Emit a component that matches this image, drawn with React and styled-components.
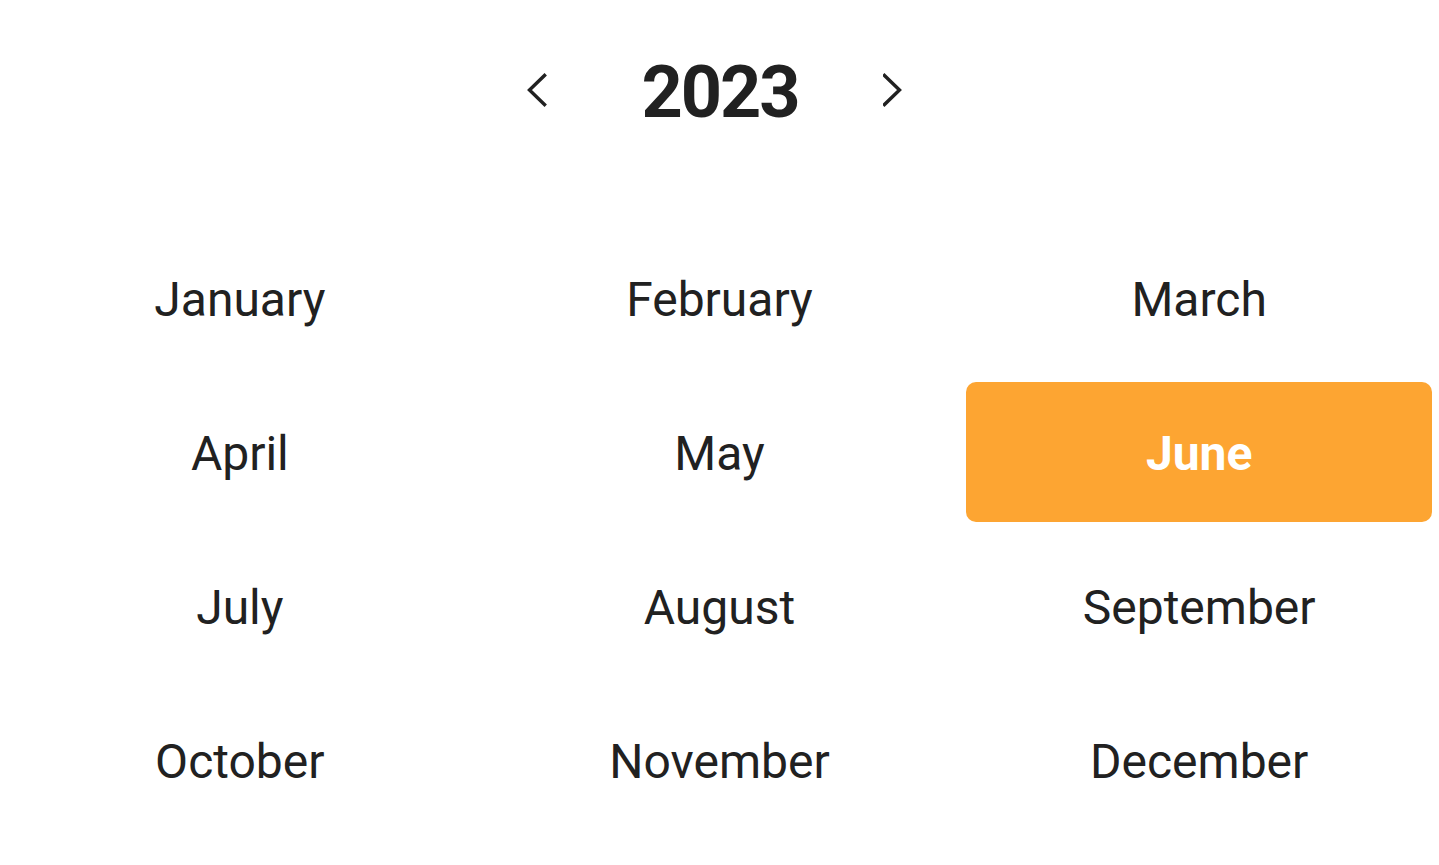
import React, { useState } from "react";
import styled, { createGlobalStyle } from "styled-components";

const GlobalStyle = createGlobalStyle`
  html, body { margin: 0; padding: 0; background: #ffffff; }
  body { font-family: Roboto, "Noto Sans", Arial, sans-serif; color: #212121; }
`;

const Page = styled.div`
  width: 1439px;
  height: 865px;
  background: #ffffff;
  overflow: hidden;
`;

const Header = styled.div`
  height: 184px;
  margin-bottom: 37px;
  display: flex;
  align-items: center;
  justify-content: center;
  padding-right: 10px;
  box-sizing: border-box;
`;

const NavButton = styled.button`
  border: none;
  background: transparent;
  padding: 0;
  margin: ${(p) => (p.$side === "left" ? "0 91px 0 0" : "0 0 0 83px")};
  display: flex;
  align-items: center;
  cursor: pointer;
  transform: translateY(-2px);
  color: #212121;
`;

const Year = styled.h1`
  margin: 0;
  font-size: 72px;
  font-weight: 700;
  line-height: normal;
  letter-spacing: -2px;
  text-indent: 2px;
  color: #212121;
  width: 162px;
  text-align: center;
`;

const Grid = styled.div`
  display: grid;
  grid-template-columns: repeat(3, 1fr);
  grid-auto-rows: 154px;
`;

const Cell = styled.div`
  margin: 7px;
  border-radius: 10px;
  display: flex;
  align-items: center;
  justify-content: center;
  padding-top: 2px;
  box-sizing: border-box;
  font-size: 48px;
  font-weight: ${(p) => (p.$active ? 700 : 400)};
  color: ${(p) => (p.$active ? "#ffffff" : "#212121")};
  background: ${(p) => (p.$active ? "#fda532" : "transparent")};
  cursor: pointer;
`;

const Chevron = ({ dir }) => (
  <svg width={dir === "left" ? 21 : 20} height="34" viewBox={dir === "left" ? "0 0 21 34" : "0 0 20 34"} fill="none">
    <polyline
      points={dir === "left" ? "18.5,2.5 3.5,17 18.5,31.5" : "1.5,2.5 16.5,17 1.5,31.5"}
      stroke="#212121"
      strokeWidth="3.4"
      strokeLinecap="square"
      strokeLinejoin="miter"
    />
  </svg>
);

const months = [
  "January", "February", "March",
  "April", "May", "June",
  "July", "August", "September",
  "October", "November", "December",
];

export default function App() {
  const [year, setYear] = useState(2023);
  const [selected, setSelected] = useState(5);
  return (
    <Page>
      <GlobalStyle />
      <Header>
        <NavButton $side="left" aria-label="Previous year" onClick={() => setYear(year - 1)}>
          <Chevron dir="left" />
        </NavButton>
        <Year>{year}</Year>
        <NavButton $side="right" aria-label="Next year" onClick={() => setYear(year + 1)}>
          <Chevron dir="right" />
        </NavButton>
      </Header>
      <Grid>
        {months.map((m, i) => (
          <Cell key={m} $active={i === selected} onClick={() => setSelected(i)}>
            {m}
          </Cell>
        ))}
      </Grid>
    </Page>
  );
}
